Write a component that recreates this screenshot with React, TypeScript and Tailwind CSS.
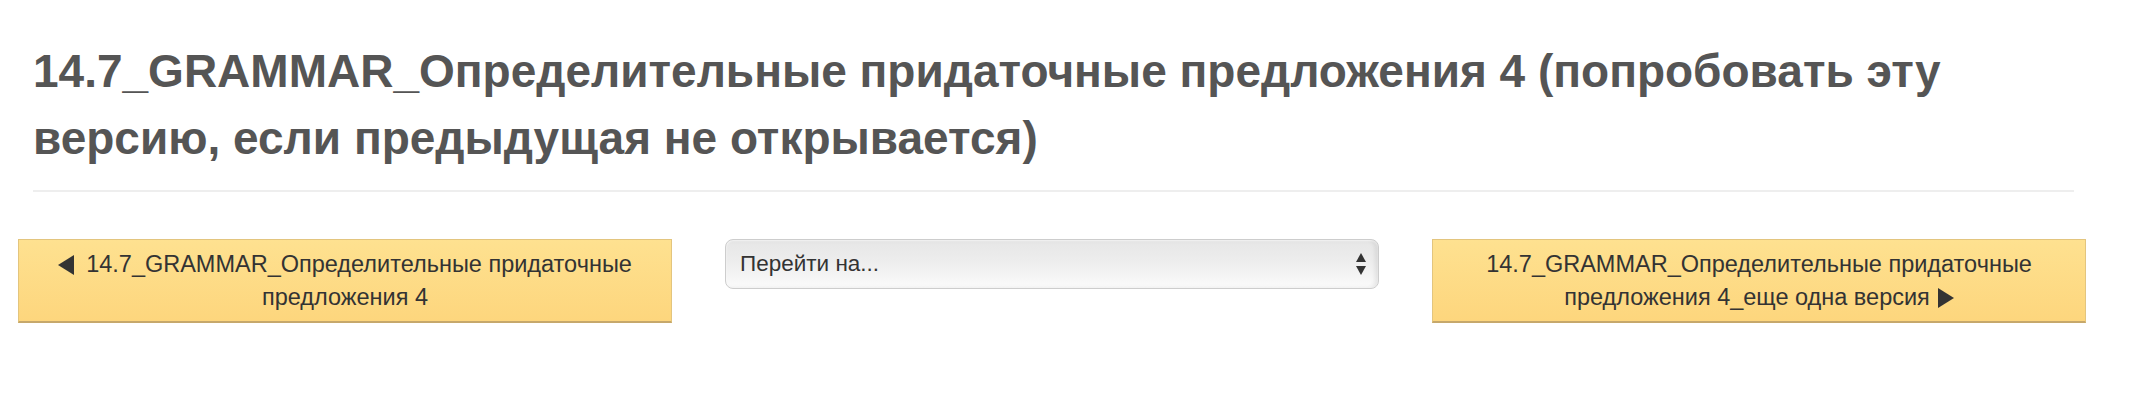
function TriangleLeft() {
  return (
    <svg viewBox="0 0 16 20" className="mr-[12px] inline-block h-[20px] w-[16px] align-[-3px]">
      <path d="M16 0 L16 20 L0 10 Z" fill="#333" />
    </svg>
  );
}

function TriangleRight() {
  return (
    <svg viewBox="0 0 16 20" className="ml-[8px] inline-block h-[20px] w-[16px] align-[-3px]">
      <path d="M0 0 L0 20 L16 10 Z" fill="#333" />
    </svg>
  );
}

function NavButton({ children }: { children: React.ReactNode }) {
  return (
    <a
      href="#"
      className="block border border-[#e3c57e] border-b-2 border-b-[#c6a86b] bg-gradient-to-b from-[#fee190] to-[#fdd67d] px-3 pt-2 pb-[7px] text-center text-[23.5px] leading-[33px] text-[#333]"
    >
      {children}
    </a>
  );
}

export default function App() {
  return (
    <div className="min-h-[400px] bg-white font-['Liberation_Sans',Arial,sans-serif]">
      <div className="ml-[18px] w-[2068px]">
        <div className="mr-[12px] ml-[15px] border-b-2 border-[#eeeeee] pt-[38px] pb-[18px]">
          <h2 className="text-[46px] leading-[67px] font-bold text-[#555]">
            14.7_GRAMMAR_Определительные придаточные предложения 4 (попробовать эту версию, если предыдущая не
            открывается)
          </h2>
        </div>

        <div className="mt-[47px] grid grid-cols-3 gap-[53px]">
          <NavButton>
            <TriangleLeft />
            14.7_GRAMMAR_Определительные придаточные предложения 4
          </NavButton>

          <div className="relative h-[50px] rounded-[8px] border border-[#cdcdcd] bg-gradient-to-b from-[#e6e6e6] via-[#eeeeee] to-[#fbfbfb] shadow-[inset_-3px_0_4px_rgba(0,0,0,0.08),inset_0_1px_2px_rgba(255,255,255,0.9)]">
            <div className="flex h-full items-center justify-between pr-[12px] pl-[14px]">
              <span className="text-[22.5px] text-[#333]">Перейти на...</span>
              <svg viewBox="0 0 10 22" className="h-[22px] w-[10px]">
                <path d="M5 0 L10 9 L0 9 Z" fill="#333" />
                <path d="M0 13 L10 13 L5 22 Z" fill="#333" />
              </svg>
            </div>
          </div>

          <NavButton>
            14.7_GRAMMAR_Определительные придаточные предложения 4_еще одна версия
            <TriangleRight />
          </NavButton>
        </div>
      </div>
    </div>
  );
}
